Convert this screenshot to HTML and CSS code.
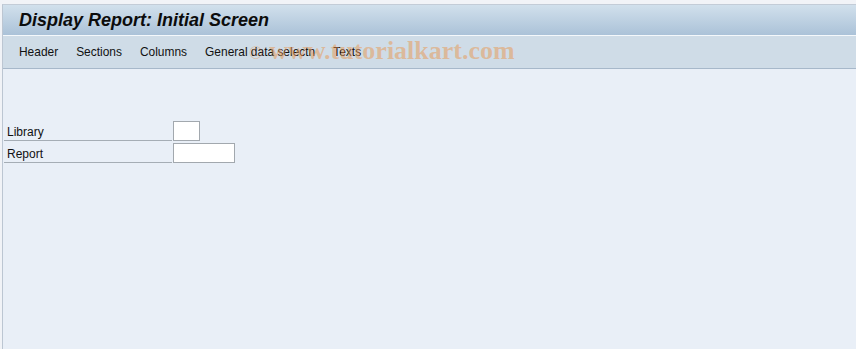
FILE: index.html
```html
<!DOCTYPE html>
<html>
<head>
<meta charset="utf-8">
<link rel="stylesheet" href="styles.css">
</head>
<body>
<div class="window">
  <div class="titlebar"><span class="title">Display Report: Initial Screen</span></div>
  <div class="toolbar">
    <span class="menu">Header</span>
    <span class="menu">Sections</span>
    <span class="menu">Columns</span>
    <span class="menu">General data selectn</span>
    <span class="menu">Texts</span>
    <div class="watermark"><span class="copy">©</span> www.tutorialkart.com</div>
  </div>
  <div class="content">
    <div class="form">
      <div class="row">
        <div class="label">Library</div>
        <div class="input small"></div>
      </div>
      <div class="row">
        <div class="label">Report</div>
        <div class="input wide"></div>
      </div>
    </div>
  </div>
</div>
</body>
</html>
```
FILE: styles.css
```css
html, body {
  margin: 0;
  padding: 0;
  background: #f1f3f7;
  width: 856px;
  height: 349px;
  overflow: hidden;
  font-family: "Liberation Sans", Arial, sans-serif;
}
.window {
  margin-left: 2px;
  margin-top: 4px;
  height: 345px;
  border-left: 1px solid #bcc6d2;
  border-top: 1px solid #c3ccd7;
  display: flex;
  flex-direction: column;
  box-sizing: border-box;
}
.titlebar {
  height: 30px;
  background: linear-gradient(#d1e0ec, #abc2d8);
  border-bottom: 1px solid #f4f8fb;
  display: flex;
  align-items: center;
  padding-left: 16px;
}
.title {
  font-weight: bold;
  font-style: italic;
  font-size: 18px;
  color: #0c0c0c;
}
.toolbar {
  position: relative;
  height: 32px;
  background: #cfdce7;
  border-bottom: 1px solid #a7b8ca;
  display: flex;
  align-items: center;
  gap: 18px;
  padding-left: 16px;
  font-size: 11.95px;
  color: #111;
}
.watermark {
  position: absolute;
  left: 246px;
  top: 0px;
  font-family: "Liberation Serif", "Times New Roman", serif;
  font-size: 26px;
  font-weight: bold;
  color: rgba(232, 150, 80, 0.5);
  white-space: nowrap;
  pointer-events: none;
}
.copy {
  font-weight: normal;
  font-size: 18px;
}
.content {
  flex: 1;
  background: #e9eff7;
  padding-top: 52px;
}
.form {
  display: flex;
  flex-direction: column;
  gap: 2px;
  padding-left: 1px;
}
.row {
  display: flex;
  align-items: flex-end;
  height: 20px;
}
.label {
  width: 165px;
  padding-left: 3px;
  height: 19px;
  line-height: 22px;
  border-bottom: 1px solid #a5adb5;
  font-size: 12px;
  color: #111;
}
.input {
  margin-left: 1px;
  height: 18px;
  background: #fff;
  border: 1px solid #a2a8ae;
}
.small { width: 25px; }
.wide { width: 60px; }
```
